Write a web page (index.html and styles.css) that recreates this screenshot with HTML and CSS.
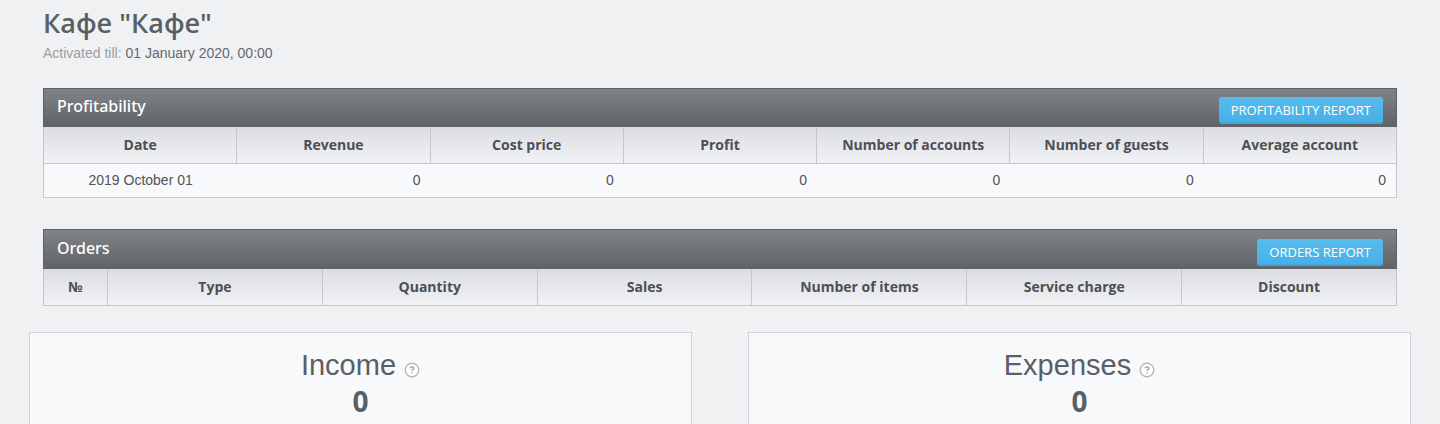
FILE: index.html
```html
<!DOCTYPE html>
<html lang="en">
<head>
<meta charset="utf-8">
<meta name="viewport" content="width=device-width, initial-scale=1">
<title>Кафе "Кафе"</title>
<link rel="stylesheet" href="styles.css">
</head>
<body>
<main class="page">
  <header class="intro">
    <h1 class="title">Кафе "Кафе"</h1>
    <p class="activated">Activated till: <span class="activated-date">01 January 2020, 00:00</span></p>
  </header>

  <section class="panel">
    <div class="panel-head">
      <h2 class="panel-title">Profitability</h2>
      <button class="report" type="button">PROFITABILITY REPORT</button>
    </div>
    <table class="grid">
      <thead>
        <tr><th>Date</th><th>Revenue</th><th>Cost price</th><th>Profit</th><th>Number of accounts</th><th>Number of guests</th><th>Average account</th></tr>
      </thead>
      <tbody>
        <tr><td class="date">2019 October 01</td><td>0</td><td>0</td><td>0</td><td>0</td><td>0</td><td>0</td></tr>
      </tbody>
    </table>
  </section>

  <section class="panel">
    <div class="panel-head panel-head-tall">
      <h2 class="panel-title">Orders</h2>
      <button class="report" type="button">ORDERS REPORT</button>
    </div>
    <table class="grid">
      <thead>
        <tr><th class="number">№</th><th>Type</th><th>Quantity</th><th>Sales</th><th>Number of items</th><th>Service charge</th><th>Discount</th></tr>
      </thead>
    </table>
  </section>

  <div class="cards">
    <section class="card">
      <h2 class="card-title">Income
        <button class="help" type="button" aria-label="About income"><svg class="help-icon" viewBox="0 0 16 16" aria-hidden="true"><circle cx="8" cy="8" r="6.8" fill="#fff" stroke="#b8bac2" stroke-width="1.4"/><path d="M6.1 6.3C6.2 4.4 9.9 4.4 9.9 6.2C9.9 7.5 8.1 7.6 8.1 9.1" fill="none" stroke="#94969c" stroke-width="1.3"/><path d="M7.4 10.2h1.3v1.4H7.4z" fill="#94969c"/></svg></button>
      </h2>
      <p class="card-value">0</p>
    </section>
    <section class="card">
      <h2 class="card-title">Expenses
        <button class="help" type="button" aria-label="About expenses"><svg class="help-icon" viewBox="0 0 16 16" aria-hidden="true"><circle cx="8" cy="8" r="6.8" fill="#fff" stroke="#b8bac2" stroke-width="1.4"/><path d="M6.1 6.3C6.2 4.4 9.9 4.4 9.9 6.2C9.9 7.5 8.1 7.6 8.1 9.1" fill="none" stroke="#94969c" stroke-width="1.3"/><path d="M7.4 10.2h1.3v1.4H7.4z" fill="#94969c"/></svg></button>
      </h2>
      <p class="card-value">0</p>
    </section>
  </div>
</main>
</body>
</html>
```
FILE: styles.css
```css
* {
  box-sizing: border-box;
}

body {
  margin: 0;
  background: #f0f1f3;
  color: #53565b;
  font-family: "Liberation Sans", Arial, sans-serif;
  font-size: 14px;
}

.page {
  display: flex;
  flex-direction: column;
  min-height: 100vh;
  padding: 3px 29px 0;
}

.intro {
  padding: 0 14px;
  margin-bottom: 25px;
}

.title {
  margin: 0;
  color: #595f66;
  font: 600 27px/40px "Open Sans", "Segoe UI", sans-serif;
}

.activated {
  margin: 0;
  color: #9b9da1;
  line-height: 20px;
}

.activated-date {
  color: #65686d;
}

.panel {
  margin: 0 14px 31px;
}

.panel-head {
  display: flex;
  justify-content: space-between;
  align-items: flex-start;
  height: 39px;
  padding: 8px 13px 0;
  border: 1px solid #5d636a;
  border-bottom: 0;
  background: linear-gradient(#808388, #5f6267);
}

.panel-head-tall {
  height: 40px;
  padding-top: 9px;
}

.panel-title {
  margin: 0;
  color: #fff;
  font: 500 16px/18px "Noto Sans", "Segoe UI", sans-serif;
}

.report {
  height: 27px;
  padding: 0 12px;
  border: 0;
  border-bottom: 2px solid #3fa6dc;
  border-radius: 3px;
  background: linear-gradient(#57bbec, #46b0e8);
  color: #fff;
  font: 13px/24px "Open Sans", "Segoe UI", sans-serif;
}

.grid {
  width: 100%;
  table-layout: fixed;
  border-collapse: separate;
  border-spacing: 0;
  border-left: 1px solid #c5c7cd;
}

.grid th,
.grid td {
  border-bottom: 1px solid #c5c7cd;
}

.grid th {
  height: 37px;
  padding: 0;
  border-right: 1px solid #c5c7cd;
  background: linear-gradient(#dcdde2, #f1f2f5);
  color: #4c4f54;
  font: 700 14px/20px "Open Sans", "Segoe UI", sans-serif;
}

.grid td {
  height: 34px;
  padding: 0 10px 2px 0;
  background: #f8f9fb;
  color: #505358;
  text-align: right;
}

.grid td:last-child {
  border-right: 1px solid #c5c7cd;
}

.grid .date {
  padding: 0 0 2px;
  text-align: center;
}

.grid .number {
  width: 64px;
}

.cards {
  display: grid;
  flex: 1;
  grid-template-columns: 1fr 1fr;
  gap: 56px;
  margin-top: -5px;
}

.card {
  padding-top: 15px;
  border: 1px solid #d0d2d7;
  border-bottom: 0;
  background: #f8f9fb;
  color: #595f66;
  text-align: center;
}

.card-title {
  margin: 0;
  font-size: 29px;
  font-weight: 400;
  line-height: 34px;
}

.help {
  width: 16px;
  height: 16px;
  padding: 0;
  border: 0;
  background: none;
  vertical-align: -3px;
}

.help-icon {
  display: block;
  width: 16px;
  height: 16px;
}

.card-value {
  margin: 0;
  font: 700 28px/38px "Noto Sans", "Segoe UI", sans-serif;
}
```
